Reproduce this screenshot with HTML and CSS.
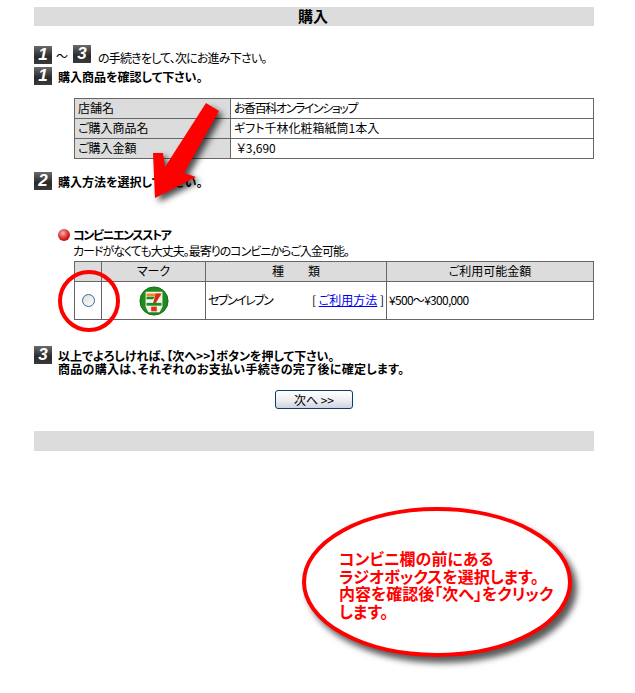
FILE: index.html
```html
<!DOCTYPE html>
<html lang="ja">
<head>
<meta charset="UTF-8">
<meta name="viewport" content="width=device-width, initial-scale=1.0">
<title>購入</title>
<link rel="stylesheet" href="styles.css">
</head>
<body>

<div class="page">
  <div class="bar bar-title">購入</div>

  <div class="step-row intro">
    <span class="badge">1</span>
    <span class="tilde">～</span>
    <span class="badge">3</span>
    <span class="intro-text">の手続きをして、次にお進み下さい。</span>
  </div>
  <div class="step-row step-one">
    <span class="badge">1</span>
    <b>購入商品を確認して下さい。</b>
  </div>

  <table class="info-table">
    <colgroup><col class="col-label"><col></colgroup>
    <tr><th>店舗名</th><td><span class="narrow">お香百科オンラインショップ</span></td></tr>
    <tr><th>ご購入商品名</th><td>ギフト千林化粧箱紙筒1本入</td></tr>
    <tr><th>ご購入金額</th><td>&nbsp;￥3,690</td></tr>
  </table>

  <div class="step-row step-two">
    <span class="badge">2</span>
    <b>購入方法を選択して下さい。</b>
  </div>

  <div class="pay-title"><span class="bullet"></span><b>コンビニエンスストア</b></div>
  <div class="pay-desc">カードがなくても大丈夫。最寄りのコンビニからご入金可能。</div>

  <table class="pay-table">
    <colgroup><col class="col-radio"><col class="col-mark"><col class="col-kind"><col></colgroup>
    <tr class="pay-head">
      <th></th>
      <th>マーク</th>
      <th>種　　類</th>
      <th>ご利用可能金額</th>
    </tr>
    <tr class="pay-row">
      <td class="center"><input type="radio" class="radio" name="pay"></td>
      <td class="center">
        <!-- セブンイレブンのロゴ -->
        <svg class="logo" width="30" height="30" viewBox="0 0 32 32">
          <circle cx="16" cy="16" r="15" fill="#1f8a1f"/>
          <circle cx="16" cy="16" r="15" fill="none" stroke="#0f6a12" stroke-width="1"/>
          <path d="M7 6h18v16l-3 6H10l-3-6z" fill="#f4f4ea"/>
          <path d="M8 8h15v3H8z" fill="#ee8a22"/>
          <path d="M8 11.500h9l-2 2.500H8z" fill="#1f8a1f"/>
          <path d="M18 8h6l-6 10h-3z" fill="#d92a1c"/>
          <path d="M8 18h16v3H8z" fill="#1f8a1f"/>
          <path d="M13 22h6v5h-6z" fill="#e0301e"/>
        </svg>
      </td>
      <td class="kind-cell">
        <div class="kind-line"><span class="kind-name">セブンイレブン</span><span>[ <a href="#">ご利用方法</a> ]</span></div>
      </td>
      <td class="amount">¥500～¥300,000</td>
    </tr>
  </table>

  <div class="step-row step-three">
    <span class="badge">3</span>
    <b>以上でよろしければ、【次へ&gt;&gt;】ボタンを押して下さい。<br><span class="wide">商品の購入は、それぞれのお支払い手続きの完了後に確定します。</span></b>
  </div>

  <div class="next-wrap"><button class="next-button">次へ &gt;&gt;</button></div>

  <div class="bar bar-bottom"></div>
</div>

<!-- 画面に重ねた注釈 -->
<svg class="notes" width="635" height="693" viewBox="0 0 635 693">
  <polygon class="arrow" points="206,103 219,111 184,173 196,177 155,198 153,153 163,153 165,167"/>
  <circle class="ring" cx="89" cy="301" r="29"/>
  <ellipse class="balloon" cx="437" cy="582" rx="133" ry="73"/>
</svg>
<div class="balloon-text">コンビニ欄の前にある<br>ラジオボックスを選択します。<br>内容を確認後「次へ」をクリック<br>します。</div>

</body>
</html>
```

FILE: styles.css
```css
body {
  margin: 0;
  font-family: "Noto Sans CJK JP", "Liberation Sans", sans-serif;
  font-size: 12px;
  font-feature-settings: "palt";
  color: #000;
  background: #fff;
}
.page {
  width: 560px;
  padding: 7px 0 0 34px;
}
.bar {
  background-color: #dcdcdc;
}
.bar-title {
  height: 19px;
  line-height: 18px;
  text-align: center;
  font-size: 15px;
  font-weight: bold;
  padding-right: 2px;
  box-sizing: border-box;
}
.bar-bottom {
  height: 20px;
  margin-top: 22px;
}

/* 手順の行 */
.step-row {
  display: flex;
  align-items: center;
  height: 18px;
  line-height: 13px;
}
.step-row b {
  margin-left: 6px;
}
.badge {
  flex: none;
  width: 18px;
  height: 18px;
  line-height: 18px;
  text-align: center;
  font-family: "Liberation Sans", sans-serif;
  font-size: 17px;
  font-weight: bold;
  font-style: italic;
  color: #fff;
  background: linear-gradient(#6a6a6a, #2a2a2a 60%, #3a3a3a);
}
.intro {
  margin-top: 20px;
}
.tilde {
  margin-left: 4px;
  width: 17px;
}
.intro .badge:nth-of-type(3) {
  margin-top: -3px;
}
.intro-text {
  margin-left: 7px;
  padding-top: 4px;
  letter-spacing: -0.8px;
}
.step-one {
  margin-top: 3px;
}
.step-two {
  margin-top: 13px;
}
.step-three {
  align-items: flex-start;
  height: 26px;
  margin-top: 26px;
}
.step-three b {
  padding-top: 3px;
}
.wide {
  letter-spacing: 0.3px;
}

/* テーブル */
table {
  border-collapse: collapse;
  table-layout: fixed;
  width: 520px;
  margin-left: 40px;
}
th, td {
  border: 1px solid #666;
  padding: 0 3px 1px;
  line-height: 18px;
  font-weight: normal;
  text-align: left;
}
th {
  background-color: #dcdcdc;
}
.info-table {
  margin-top: 13px;
}
.info-table tr {
  height: 20px;
}
.narrow {
  letter-spacing: -1.400px;
}
.col-label {
  width: 156px;
}
.pay-title {
  display: flex;
  align-items: center;
  height: 13px;
  margin: 38px 0 0 24px;
  letter-spacing: -1.400px;
}
.bullet {
  width: 12px;
  height: 12px;
  margin-right: 3px;
  border-radius: 50%;
  background: radial-gradient(circle at 40% 35%, #f7b0b0, #d42020 55%, #8c1010);
}
.pay-desc {
  margin: 3px 0 0 39px;
  height: 13px;
  line-height: 13px;
  letter-spacing: -1px;
}
.pay-table {
  margin-top: 4px;
}
.col-radio {
  width: 27px;
}
.col-mark {
  width: 104px;
}
.col-kind {
  width: 181px;
}
.pay-head {
  height: 20px;
}
.pay-head th {
  text-align: center;
}
.pay-row {
  height: 38px;
}
.center {
  text-align: center;
  padding: 0;
}
.logo {
  display: block;
  margin: 0 auto;
}
.radio {
  appearance: none;
  display: block;
  width: 13px;
  height: 13px;
  margin: 0 auto;
  border: 1px solid #2f6aa5;
  border-radius: 50%;
  background: linear-gradient(135deg, #dcdcd6, #fff);
}
.kind-cell {
  padding: 0 2px 1px;
}
.kind-line {
  display: flex;
  justify-content: space-between;
}
.kind-name {
  letter-spacing: -1.500px;
}
a {
  color: #0000ee;
}
.amount {
  padding: 0 2px 1px;
  letter-spacing: -0.700px;
}

/* 次へボタン */
.next-wrap {
  margin-top: 18px;
  padding-left: 241px;
}
.next-button {
  display: block;
  width: 78px;
  height: 19px;
  padding: 0;
  font-family: inherit;
  font-size: 12px;
  line-height: 15px;
  border: 1px solid #0a3d6e;
  border-radius: 3px;
  background: linear-gradient(#fff, #f0f0f4 50%, #d2d2e0);
}

/* 注釈 */
.notes {
  position: absolute;
  left: 0;
  top: 0;
}
.arrow {
  fill: #ff0000;
  filter: drop-shadow(4px 4px 3px rgba(0,0,0,0.7));
}
.ring {
  fill: none;
  stroke: #ff0000;
  stroke-width: 4;
}
.balloon {
  fill: #fff;
  stroke: #ff0000;
  stroke-width: 4;
  filter: drop-shadow(5px 6px 3px rgba(0,0,0,0.65));
}
.balloon-text {
  position: absolute;
  left: 339px;
  top: 550px;
  font-size: 16px;
  line-height: 17.500px;
  font-weight: bold;
  color: #ff0000;
  white-space: nowrap;
}
```
